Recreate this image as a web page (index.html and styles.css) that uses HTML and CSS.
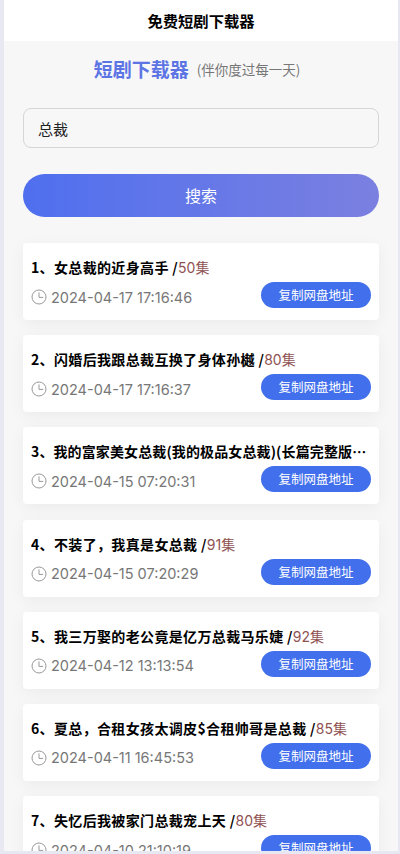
FILE: index.html
```html
<!DOCTYPE html>
<html lang="zh-CN">
<head>
    <meta charset="UTF-8">
    <meta name="viewport" content="width=device-width, initial-scale=1.0">
    <title>免费短剧下载器</title>
    <link rel="stylesheet" href="styles.css">
</head>
<body>
    <div class="page">
        <div class="nav-title">免费短剧下载器</div>
        <div class="content">
            <div class="brand">
                <span class="brand-name">短剧下载器</span>
                <span class="brand-sub">(伴你度过每一天)</span>
            </div>
            <div class="search-input">总裁</div>
            <div class="search-btn">搜索</div>

            <div class="list">
                <div class="card">
                    <div class="card-title">1、女总裁的近身高手 /<span class="count">50集</span></div>
                    <div class="card-row">
                        <div class="card-time">
                            <svg class="clock" viewBox="0 0 16 16"><circle cx="8" cy="8" r="7"/><path d="M8 3.4V8.4H12.2"/></svg>
                            2024-04-17 17:16:46
                        </div>
                        <div class="copy-btn">复制网盘地址</div>
                    </div>
                </div>
                <div class="card">
                    <div class="card-title">2、闪婚后我跟总裁互换了身体孙樾 /<span class="count">80集</span></div>
                    <div class="card-row">
                        <div class="card-time">
                            <svg class="clock" viewBox="0 0 16 16"><circle cx="8" cy="8" r="7"/><path d="M8 3.4V8.4H12.2"/></svg>
                            2024-04-17 17:16:37
                        </div>
                        <div class="copy-btn">复制网盘地址</div>
                    </div>
                </div>
                <div class="card">
                    <div class="card-title card-title-long">3、我的富家美女总裁(我的极品女总裁)(长篇完整版）/<span class="count">100集</span></div>
                    <div class="card-row">
                        <div class="card-time">
                            <svg class="clock" viewBox="0 0 16 16"><circle cx="8" cy="8" r="7"/><path d="M8 3.4V8.4H12.2"/></svg>
                            2024-04-15 07:20:31
                        </div>
                        <div class="copy-btn">复制网盘地址</div>
                    </div>
                </div>
                <div class="card">
                    <div class="card-title">4、不装了，我真是女总裁 /<span class="count">91集</span></div>
                    <div class="card-row">
                        <div class="card-time">
                            <svg class="clock" viewBox="0 0 16 16"><circle cx="8" cy="8" r="7"/><path d="M8 3.4V8.4H12.2"/></svg>
                            2024-04-15 07:20:29
                        </div>
                        <div class="copy-btn">复制网盘地址</div>
                    </div>
                </div>
                <div class="card">
                    <div class="card-title">5、我三万娶的老公竟是亿万总裁马乐婕 /<span class="count">92集</span></div>
                    <div class="card-row">
                        <div class="card-time">
                            <svg class="clock" viewBox="0 0 16 16"><circle cx="8" cy="8" r="7"/><path d="M8 3.4V8.4H12.2"/></svg>
                            2024-04-12 13:13:54
                        </div>
                        <div class="copy-btn">复制网盘地址</div>
                    </div>
                </div>
                <div class="card">
                    <div class="card-title">6、夏总，合租女孩太调皮$合租帅哥是总裁 /<span class="count">85集</span></div>
                    <div class="card-row">
                        <div class="card-time">
                            <svg class="clock" viewBox="0 0 16 16"><circle cx="8" cy="8" r="7"/><path d="M8 3.4V8.4H12.2"/></svg>
                            2024-04-11 16:45:53
                        </div>
                        <div class="copy-btn">复制网盘地址</div>
                    </div>
                </div>
                <div class="card">
                    <div class="card-title">7、失忆后我被家门总裁宠上天 /<span class="count">80集</span></div>
                    <div class="card-row">
                        <div class="card-time">
                            <svg class="clock" viewBox="0 0 16 16"><circle cx="8" cy="8" r="7"/><path d="M8 3.4V8.4H12.2"/></svg>
                            2024-04-10 21:10:19
                        </div>
                        <div class="copy-btn">复制网盘地址</div>
                    </div>
                </div>
            </div>
        </div>
    </div>
</body>
</html>
```

FILE: styles.css
```css
html, body {
    margin: 0;
    padding: 0;
    height: 100%;
    overflow: hidden;
}

body {
    background-color: #e8e8f3;
    font-family: "Noto Sans CJK SC", "Liberation Sans", sans-serif;
    color: #000;
}

.page {
    margin: 0 2px 3px 4px;
    height: 851px;
    overflow: hidden;
    background-color: #f7f7f8;
}

.nav-title {
    height: 41px;
    line-height: 40px;
    background-color: #fff;
    text-align: center;
    font-size: 15.3px;
    font-weight: 700;
}

.content {
    padding: 0 19px;
}

.brand {
    height: 55px;
    margin-bottom: 12px;
    padding-right: 8px;
    display: flex;
    justify-content: center;
    align-items: center;
    gap: 8px;
}

.brand-name {
    font-size: 19px;
    font-weight: 700;
    color: #5c74e4;
}

.brand-sub {
    font-size: 13.5px;
    color: #777;
}

.search-input {
    height: 38px;
    line-height: 40px;
    padding-left: 14px;
    border: 1px solid #d6d6d8;
    border-radius: 8px;
    font-size: 15px;
    color: #222;
}

.search-btn {
    height: 43px;
    line-height: 43px;
    margin-top: 26px;
    border-radius: 22px;
    background: linear-gradient(90deg, #4f6fef, #7b80e0);
    color: #fff;
    text-align: center;
    font-size: 16px;
}

.list {
    margin-top: 26px;
    display: flex;
    flex-direction: column;
    gap: 15.2px;
}

.card {
    height: 77px;
    flex-shrink: 0;
    padding: 0 8px;
    background-color: #fff;
    border-radius: 4px;
    box-shadow: 0 4px 16px rgba(0, 0, 0, 0.05);
}

.card-title {
    padding-top: 14px;
    height: 20px;
    line-height: 20px;
    font-size: 14px;
    font-weight: 700;
    letter-spacing: 0.35px;
    white-space: nowrap;
    overflow: hidden;
    text-overflow: ellipsis;
}

.card-title-long {
    letter-spacing: 0.12px;
}

.count {
    font-family: "Inter", "Noto Sans CJK SC", sans-serif;
    font-size: 14px;
    font-weight: 400;
    letter-spacing: 0;
    color: #8f5252;
}

.card-row {
    margin-top: 5px;
    display: flex;
    justify-content: space-between;
    align-items: center;
}

.card-time {
    padding-top: 4px;
    display: flex;
    align-items: center;
    gap: 4px;
    font-family: "Inter", "Liberation Sans", sans-serif;
    font-size: 14.5px;
    color: #777;
}

.clock {
    width: 16px;
    height: 16px;
    fill: none;
    stroke: #999;
    stroke-width: 1;
}

.copy-btn {
    width: 110px;
    height: 26px;
    line-height: 26px;
    border-radius: 13px;
    background-color: #4270ec;
    color: #fff;
    text-align: center;
    font-size: 12.5px;
}
```
